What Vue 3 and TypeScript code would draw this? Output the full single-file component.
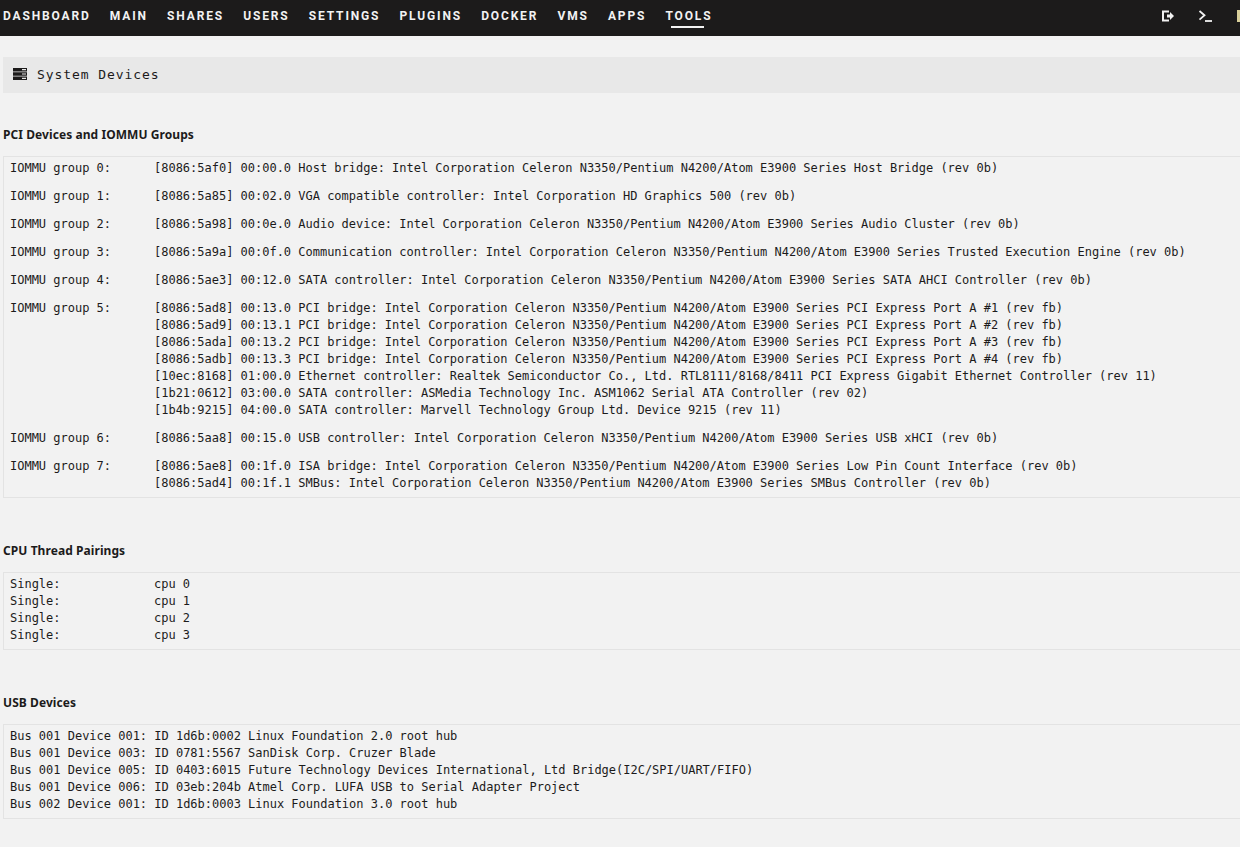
<script setup lang="ts">
const navItems = ['DASHBOARD', 'MAIN', 'SHARES', 'USERS', 'SETTINGS', 'PLUGINS', 'DOCKER', 'VMS', 'APPS', 'TOOLS']

interface Group { label: string; lines: string[] }
const P = 'Intel Corporation Celeron N3350/Pentium N4200/Atom E3900 Series'
const groups: Group[] = [
  { label: 'IOMMU group 0:', lines: [`[8086:5af0] 00:00.0 Host bridge: ${P} Host Bridge (rev 0b)`] },
  { label: 'IOMMU group 1:', lines: ['[8086:5a85] 00:02.0 VGA compatible controller: Intel Corporation HD Graphics 500 (rev 0b)'] },
  { label: 'IOMMU group 2:', lines: [`[8086:5a98] 00:0e.0 Audio device: ${P} Audio Cluster (rev 0b)`] },
  { label: 'IOMMU group 3:', lines: [`[8086:5a9a] 00:0f.0 Communication controller: ${P} Trusted Execution Engine (rev 0b)`] },
  { label: 'IOMMU group 4:', lines: [`[8086:5ae3] 00:12.0 SATA controller: ${P} SATA AHCI Controller (rev 0b)`] },
  {
    label: 'IOMMU group 5:',
    lines: [
      `[8086:5ad8] 00:13.0 PCI bridge: ${P} PCI Express Port A #1 (rev fb)`,
      `[8086:5ad9] 00:13.1 PCI bridge: ${P} PCI Express Port A #2 (rev fb)`,
      `[8086:5ada] 00:13.2 PCI bridge: ${P} PCI Express Port A #3 (rev fb)`,
      `[8086:5adb] 00:13.3 PCI bridge: ${P} PCI Express Port A #4 (rev fb)`,
      '[10ec:8168] 01:00.0 Ethernet controller: Realtek Semiconductor Co., Ltd. RTL8111/8168/8411 PCI Express Gigabit Ethernet Controller (rev 11)',
      '[1b21:0612] 03:00.0 SATA controller: ASMedia Technology Inc. ASM1062 Serial ATA Controller (rev 02)',
      '[1b4b:9215] 04:00.0 SATA controller: Marvell Technology Group Ltd. Device 9215 (rev 11)',
    ],
  },
  { label: 'IOMMU group 6:', lines: [`[8086:5aa8] 00:15.0 USB controller: ${P} USB xHCI (rev 0b)`] },
  {
    label: 'IOMMU group 7:',
    lines: [
      `[8086:5ae8] 00:1f.0 ISA bridge: ${P} Low Pin Count Interface (rev 0b)`,
      `[8086:5ad4] 00:1f.1 SMBus: ${P} SMBus Controller (rev 0b)`,
    ],
  },
]
const cpus = ['cpu 0', 'cpu 1', 'cpu 2', 'cpu 3']
const usb = [
  'Bus 001 Device 001: ID 1d6b:0002 Linux Foundation 2.0 root hub',
  'Bus 001 Device 003: ID 0781:5567 SanDisk Corp. Cruzer Blade',
  'Bus 001 Device 005: ID 0403:6015 Future Technology Devices International, Ltd Bridge(I2C/SPI/UART/FIFO)',
  'Bus 001 Device 006: ID 03eb:204b Atmel Corp. LUFA USB to Serial Adapter Project',
  'Bus 002 Device 001: ID 1d6b:0003 Linux Foundation 3.0 root hub',
]
</script>

<template>
  <div class="page">
    <nav class="nav">
      <a v-for="n in navItems" :key="n" class="nav-item" :class="{ active: n === 'TOOLS' }">{{ n }}</a>
      <div class="nav-icons">
        <svg width="14" height="14" viewBox="0 0 14 14" fill="#f2f2f2">
          <path d="M2 1.5h7v2H4v7h5v2H2z" />
          <path d="M7 5.5h3V3l4 4-4 4V8.5H7z" />
        </svg>
        <svg width="15" height="14" viewBox="0 0 15 14" fill="none" stroke="#f2f2f2">
          <path d="M1.5 2l5 4.3-5 4.3" stroke-width="1.8" />
          <path d="M7 12h7" stroke-width="1.8" />
        </svg>
        <svg width="14" height="14" viewBox="0 0 14 14" fill="#d8cf9a">
          <path d="M0 1h14v12H0z" />
        </svg>
      </div>
    </nav>

    <header class="title-bar">
      <svg class="title-icon" width="14" height="12" viewBox="0 0 14 12" fill="#1c1b1b">
        <path fill-rule="evenodd" d="M0 0h14v3.4H0zM0 4.3h14v3.4H0zM0 8.6h14V12H0zM9 1v1.2h4V1zM9 5.4v1.2h4V5.4zM9 9.7v1.2h4V9.7z" />
      </svg>
      <span class="title-text">System Devices</span>
    </header>

    <h2 class="section-head first">PCI Devices and IOMMU Groups</h2>
    <section class="box">
      <div v-for="g in groups" :key="g.label" class="row group">
        <span>{{ g.label }}</span>
        <div><div v-for="l in g.lines" :key="l" class="line">{{ l }}</div></div>
      </div>
    </section>

    <h2 class="section-head">CPU Thread Pairings</h2>
    <section class="box">
      <div v-for="c in cpus" :key="c" class="row">
        <span>Single:</span>
        <div class="line">{{ c }}</div>
      </div>
    </section>

    <h2 class="section-head">USB Devices</h2>
    <section class="box">
      <div v-for="u in usb" :key="u" class="line">{{ u }}</div>
    </section>
  </div>
</template>

<style>
html, body { background: #f2f2f2; overflow: hidden; height: 100%; }
</style>

<style scoped>
.page {
  width: 1300px;
  height: 847px;
  overflow: hidden;
  background: #f2f2f2;
  color: #1c1b1b;
}
.nav {
  width: 1240px;
  height: 36px;
  box-sizing: border-box;
  background: #1c1b1b;
  display: flex;
  align-items: center;
  padding: 0 0 4px 3px;
  gap: 19.2px;
  overflow: hidden;
}
.nav-item {
  position: relative;
  font-family: "Roboto", sans-serif;
  font-weight: 700;
  font-size: 12px;
  line-height: 16px;
  letter-spacing: 1.85px;
  color: #f2f2f2;
  white-space: nowrap;
  flex: none;
}
.nav-item.active::after {
  content: "";
  position: absolute;
  left: 6px;
  right: 8px;
  bottom: -4px;
  height: 2px;
  background: #f2f2f2;
}
.nav-icons {
  margin-left: auto;
  margin-right: -11px;
  display: flex;
  gap: 24px;
  align-items: center;
  flex: none;
}
.title-bar {
  margin: 21px 0 0 3px;
  height: 36px;
  background: #e8e8e8;
  display: flex;
  align-items: center;
  padding: 0 0 2px 10px;
  box-sizing: border-box;
}
.title-icon { margin-right: 10px; }
.title-text {
  font-family: "DejaVu Sans Mono", monospace;
  font-size: 13px;
  letter-spacing: 0.92px;
}
.section-head {
  margin: 44px 0 13px 3px;
  font-family: "Noto Sans", sans-serif;
  font-size: 12px;
  font-weight: 700;
  line-height: 17px;
  letter-spacing: 0.07px;
}
.section-head.first { margin-top: 33px; }
.box {
  margin-left: 3px;
  border: 1px solid #e3e3e3;
  padding: 3px 0 5px 6px;
  font-family: "DejaVu Sans Mono", monospace;
  font-size: 12px;
  line-height: 17px;
  letter-spacing: -0.01px;
  white-space: pre;
}
.row {
  display: grid;
  grid-template-columns: 144px 1fr;
}
.group + .group { margin-top: 11px; }
</style>
